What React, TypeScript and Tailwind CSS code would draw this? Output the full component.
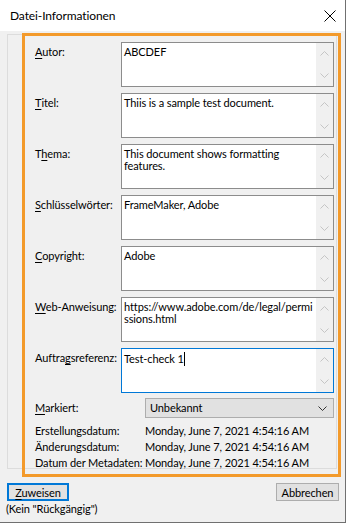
import React from 'react';

const fields = [
    { label: 'Autor:', key: 'A', rest: 'utor:', pre: '', value: 'ABCDEF' },
    { label: 'Titel:', key: 'T', rest: 'itel:', pre: '', value: 'Thiis is a sample test document.' },
    { label: 'Thema:', key: 'h', rest: 'ema:', pre: 'T', value: 'This document shows formatting features.' },
    { label: 'Schlüsselwörter:', key: 'S', rest: 'chlüsselwörter:', pre: '', value: 'FrameMaker, Adobe' },
    { label: 'Copyright:', key: 'C', rest: 'opyright:', pre: '', value: 'Adobe' },
    { label: 'Web-Anweisung:', key: 'W', rest: 'eb-Anweisung:', pre: '', value: 'https://www.adobe.com/de/legal/permissions.html', breakAll: true },
    { label: 'Auftragsreferenz:', key: 'g', rest: 'sreferenz:', pre: 'Auftra', value: 'Test-check 1', active: true },
];

const dates = [
    { label: 'Erstellungsdatum:', value: 'Monday, June 7, 2021 4:54:16 AM' },
    { label: 'Änderungsdatum:', value: 'Monday, June 7, 2021 4:54:16 AM' },
    { label: 'Datum der Metadaten:', value: 'Monday, June 7, 2021 4:54:16 AM' },
];

const Chevron = ({ up, color = '#c5c5c5' }: { up?: boolean; color?: string }) => (
    <svg width="9" height="5" viewBox="0 0 9 5">
        <path d={up ? 'M0.5 4.5 L4.5 0.5 L8.5 4.5' : 'M0.5 0.5 L4.5 4.5 L8.5 0.5'} fill="none" stroke={color} strokeWidth="1" />
    </svg>
);

const TextBox = ({ value, active, breakAll }: { value: string; active?: boolean; breakAll?: boolean }) => (
    <div className={`flex w-[213px] h-[45px] bg-white border ${active ? 'border-[#0078d7]' : 'border-[#8c8c8c]'}`}>
        <div className={`flex-1 px-[2px] pt-[3px] leading-[12px] text-black ${breakAll ? 'break-all' : ''}`}>
            {value}
            {active && <span className="inline-block w-px h-[14px] bg-black align-[-3px]" />}
        </div>
        <div className="w-[17px] bg-[#f0f0f0] flex flex-col items-center justify-between py-[8px]">
            <Chevron up />
            <Chevron />
        </div>
    </div>
);

export default function App() {
    return (
        <div className="relative w-[347px] h-[524px] bg-white text-[11px] tracking-[-0.1px] text-black font-['Lato','Liberation_Sans',sans-serif]">
            <div className="w-[346px] h-[523px] bg-[#f0f0f0] border-r border-b border-[#707070]">
                {/* Title bar */}
                <div className="h-[31px] bg-white flex items-center justify-between pl-[10px] pr-[9px]">
                    <span className="text-[12px]">Datei-Informationen</span>
                    <svg width="12" height="12" viewBox="0 0 12 12">
                        <path d="M0.5 0.5 L11.5 11.5 M11.5 0.5 L0.5 11.5" stroke="#000" strokeWidth="1" />
                    </svg>
                </div>

                {/* Group box */}
                <div className="ml-[7px] mt-[3px] w-[330px] h-[435px] border border-[#dcdcdc] pl-[27px] pt-[7px]">
                    <div className="flex flex-col gap-[6px]">
                        {fields.map(f => (
                            <div key={f.label} className="flex">
                                <div className="w-[86px] pt-[4px] leading-[12px] whitespace-nowrap">
                                    {f.pre}<span className="underline underline-offset-2">{f.key}</span>{f.rest}
                                </div>
                                <TextBox value={f.value} active={f.active} breakAll={f.breakAll} />
                            </div>
                        ))}
                    </div>

                    <div className="flex items-center mt-[5px]">
                        <div className="w-[110px]">
                            <span className="underline underline-offset-2">M</span>arkiert:
                        </div>
                        <div className="w-[189px] h-[20px] bg-[#e1e1e1] border border-[#adadad] flex items-center justify-between pl-[4px] pr-[6px]">
                            <span>Unbekannt</span>
                            <Chevron color="#333" />
                        </div>
                    </div>

                    <div className="flex flex-col mt-[5px] leading-[16px]">
                        {dates.map(d => (
                            <div key={d.label} className="flex">
                                <div className="w-[110px] whitespace-nowrap">{d.label}</div>
                                <div className="whitespace-nowrap">{d.value}</div>
                            </div>
                        ))}
                    </div>
                </div>

                {/* Buttons */}
                <div className="flex justify-between pl-[7px] pr-[6px] mt-[14px]">
                    <button className="w-[62px] h-[18px] bg-[#e1e1e1] border-2 border-[#0078d7] flex items-center justify-center leading-none">
                        <span><span className="underline underline-offset-2">Z</span>uweisen</span>
                    </button>
                    <button className="w-[63px] h-[18px] bg-[#e1e1e1] border border-[#adadad] flex items-center justify-center leading-none">
                        Abbrechen
                    </button>
                </div>
                <div className="pl-[6px] leading-[16px]">(Kein "Rückgängig")</div>
            </div>

            {/* Orange highlight overlay */}
            <div className="absolute left-[22px] top-[33px] w-[319px] h-[444px] border-[3px] border-[#f39a2b] pointer-events-none" />
        </div>
    );
}
